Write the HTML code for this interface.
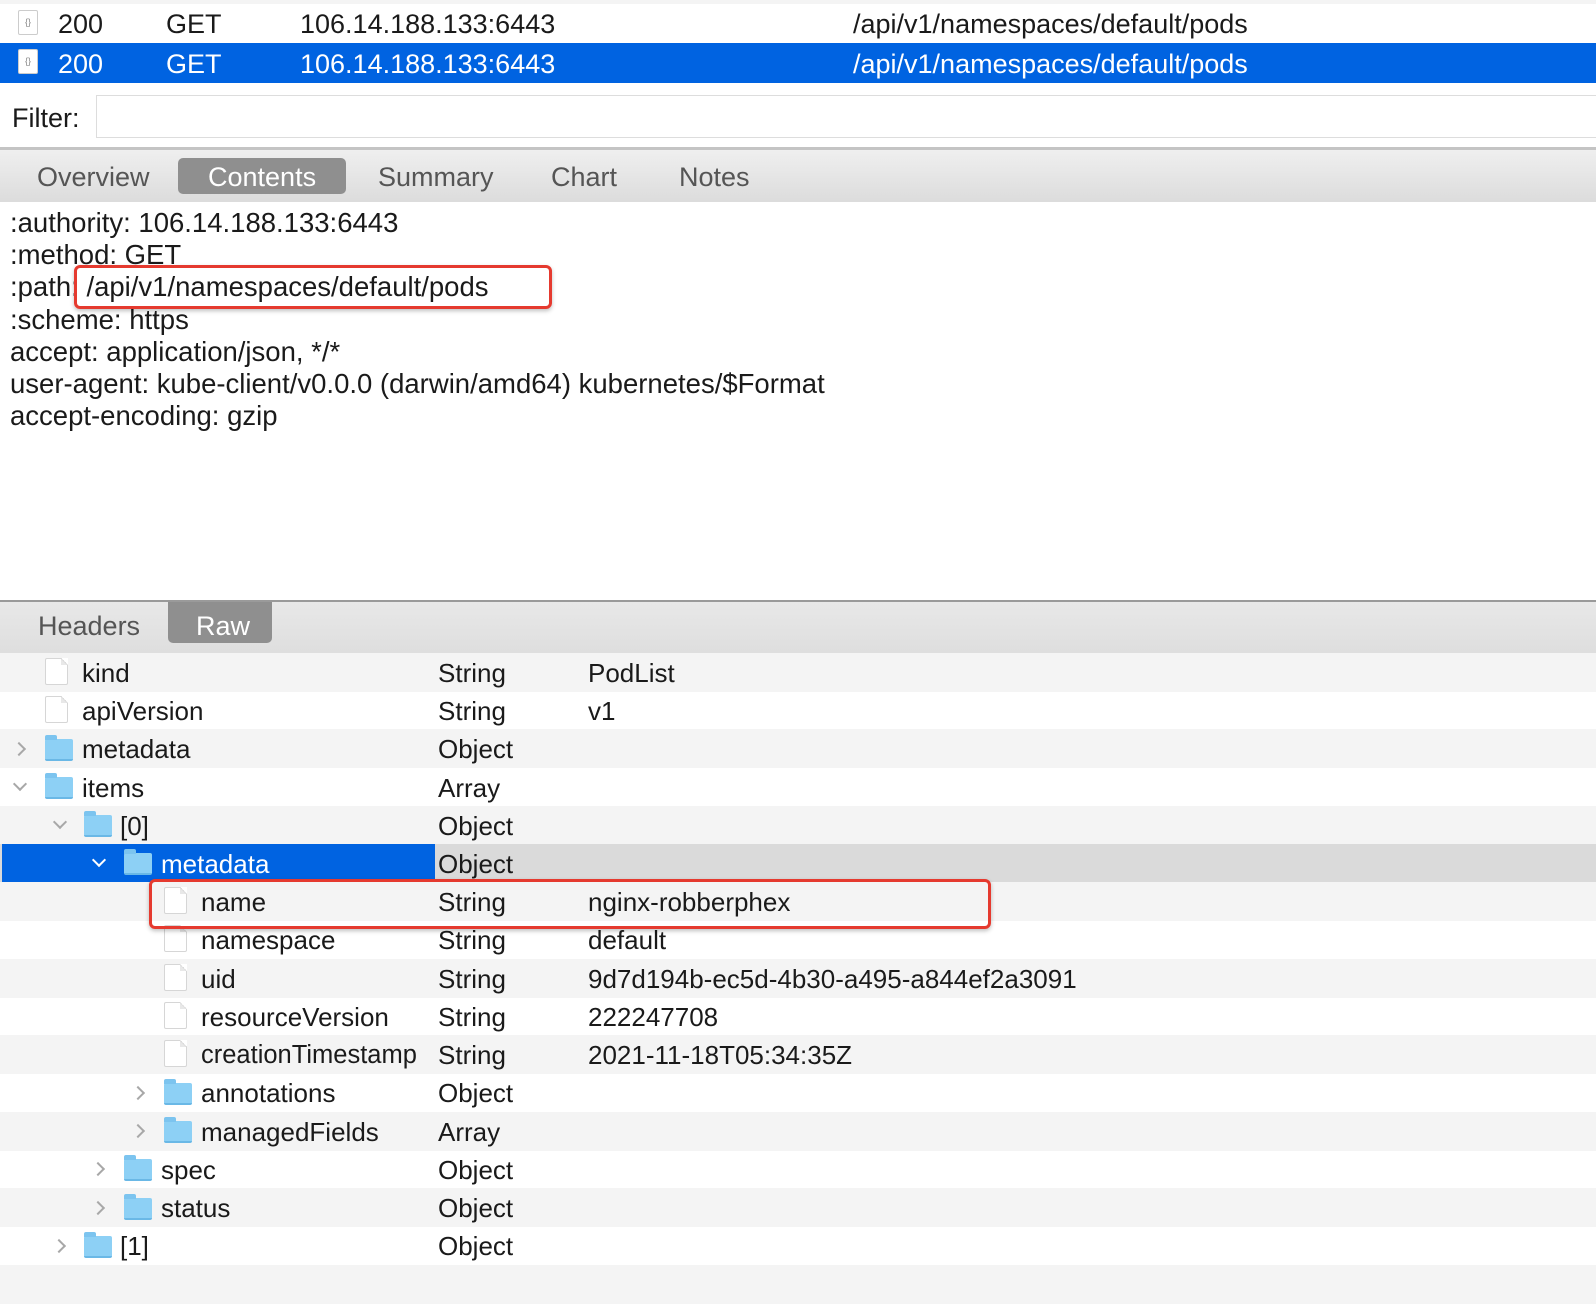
<!DOCTYPE html>
<html><head><meta charset="utf-8"><style>
*{margin:0;padding:0;box-sizing:border-box}
body{width:1596px;height:1310px;position:relative;overflow:hidden;background:#fff;font-family:"Liberation Sans",sans-serif;color:#1a1a1a}
.a{position:absolute;white-space:nowrap}
.t{font-size:26px;line-height:38px;padding-top:1px}
.h{font-size:27px;line-height:38px;padding-top:1px}
.row{position:absolute;left:0;width:1596px;height:39px}
.g{background:#f4f4f4}
.file{position:absolute;width:23px;height:27px;background:#fff;border:1px solid #d6d6d6;border-radius:2px}
.file:after{content:"";position:absolute;right:-1px;top:-1px;width:7px;height:7px;background:linear-gradient(225deg,#fff 50%,#ccc 50%,#e8e8e8 60%)}
.fold{position:absolute;width:28px;height:22px;background:#8dd0f5;border-radius:2px;border-bottom:2px solid #6ab8e6}
.fold:before{content:"";position:absolute;left:0;top:-4px;width:12px;height:5px;background:#7cc4ef;border-radius:2px 2px 0 0}
.chev{position:absolute;width:10px;height:10px;border-right:2px solid #a8a8a8;border-bottom:2px solid #a8a8a8}
.r{transform:rotate(-45deg)}
.d{transform:rotate(45deg)}
</style></head><body>
<div class="a" style="left:0;top:0;width:1596px;height:4px;background:#f4f4f4"></div>
<div class="a" style="left:0;top:43px;width:1596px;height:40px;background:#0063e1"></div>
<div class="a" style="left:18px;top:10px;width:20px;height:25px;background:#fff;border:1px solid #ccc;border-radius:2px;font-size:9px;color:#888;text-align:center;line-height:22px">{}</div>
<div class="a" style="left:18px;top:49px;width:20px;height:25px;background:#fff;border:1px solid #ccc;border-radius:2px;font-size:9px;color:#888;text-align:center;line-height:22px">{}</div>
<div class="a h" style="left:58px;top:4px">200</div>
<div class="a h" style="left:166px;top:4px">GET</div>
<div class="a h" style="left:300px;top:4px">106.14.188.133:6443</div>
<div class="a h" style="left:853px;top:4px">/api/v1/namespaces/default/pods</div>
<div class="a h" style="left:58px;top:44px;color:#fff">200</div>
<div class="a h" style="left:166px;top:44px;color:#fff">GET</div>
<div class="a h" style="left:300px;top:44px;color:#fff">106.14.188.133:6443</div>
<div class="a h" style="left:853px;top:44px;color:#fff">/api/v1/namespaces/default/pods</div>
<div class="a h" style="left:12px;top:98px">Filter:</div>
<div class="a" style="left:96px;top:95px;width:1500px;height:43px;border:1px solid #ddd;border-right:none;background:#fff"></div>
<div class="a" style="left:0;top:147px;width:1596px;height:3px;background:#c4c4c4"></div>
<div class="a" style="left:0;top:150px;width:1596px;height:52px;background:linear-gradient(#efefef,#dcdcdc)"></div>
<div class="a" style="left:178px;top:158px;width:168px;height:36px;background:#8f8f8f;border-radius:5px"></div>
<div class="a h" style="left:37px;top:157px;color:#555">Overview</div>
<div class="a h" style="left:208px;top:157px;color:#fff">Contents</div>
<div class="a h" style="left:378px;top:157px;color:#555">Summary</div>
<div class="a h" style="left:551px;top:157px;color:#555">Chart</div>
<div class="a h" style="left:679px;top:157px;color:#555">Notes</div>
<div class="a" style="left:10px;top:207px;font-size:27.5px;line-height:32.2px">:authority: 106.14.188.133:6443<br>:method: GET<br>:path: /api/v1/namespaces/default/pods<br>:scheme: https<br>accept: application/json, */*<br>user-agent: kube-client/v0.0.0 (darwin/amd64) kubernetes/$Format<br>accept-encoding: gzip</div>
<div class="a" style="left:74px;top:265px;width:478px;height:44px;border:3px solid #e53a2f;border-radius:6px;box-shadow:0 2px 4px rgba(0,0,0,.25)"></div>
<div class="a" style="left:0;top:600px;width:1596px;height:2px;background:#9a9a9a"></div>
<div class="a" style="left:0;top:602px;width:1596px;height:51px;background:linear-gradient(#e8e8e8,#dedede)"></div>
<div class="a" style="left:168px;top:602px;width:104px;height:41px;background:#8f8f8f;border-radius:0 0 5px 5px"></div>
<div class="a h" style="left:38px;top:606px;color:#555">Headers</div>
<div class="a h" style="left:196px;top:606px;color:#fff">Raw</div>

<div class="row g" style="top:653px"></div>
<div class="row g" style="top:729px"></div>
<div class="row g" style="top:806px"></div>
<div class="row" style="top:844px;background:#dadada"></div>
<div class="a" style="left:2px;top:844px;width:433px;height:38px;background:#0063e1"></div>
<div class="row g" style="top:882px"></div>
<div class="row g" style="top:959px"></div>
<div class="row g" style="top:1035px"></div>
<div class="row g" style="top:1112px"></div>
<div class="row g" style="top:1188px"></div>
<div class="row g" style="top:1265px"></div>

<div class="file" style="left:45px;top:658px"></div><div class="a t" style="left:82px;top:653px">kind</div><div class="a t" style="left:438px;top:653px">String</div><div class="a t" style="left:588px;top:653px">PodList</div>
<div class="file" style="left:45px;top:696px"></div><div class="a t" style="left:82px;top:691px">apiVersion</div><div class="a t" style="left:438px;top:691px">String</div><div class="a t" style="left:588px;top:691px">v1</div>
<div class="chev r" style="left:14px;top:744px"></div><div class="fold" style="left:45px;top:739px"></div><div class="a t" style="left:82px;top:729px">metadata</div><div class="a t" style="left:438px;top:729px">Object</div>
<div class="chev d" style="left:15px;top:779px"></div><div class="fold" style="left:45px;top:777px"></div><div class="a t" style="left:82px;top:768px">items</div><div class="a t" style="left:438px;top:768px">Array</div>
<div class="chev d" style="left:55px;top:817px"></div><div class="fold" style="left:84px;top:815px"></div><div class="a t" style="left:120px;top:806px">[0]</div><div class="a t" style="left:438px;top:806px">Object</div>
<div class="chev d" style="left:94px;top:855px;border-color:#fff"></div><div class="fold" style="left:124px;top:853px"></div><div class="a t" style="left:161px;top:844px;color:#fff">metadata</div><div class="a t" style="left:438px;top:844px">Object</div>
<div class="file" style="left:164px;top:887px"></div><div class="a t" style="left:201px;top:882px">name</div><div class="a t" style="left:438px;top:882px">String</div><div class="a t" style="left:588px;top:882px">nginx-robberphex</div>
<div class="file" style="left:164px;top:925px"></div><div class="a t" style="left:201px;top:920px">namespace</div><div class="a t" style="left:438px;top:920px">String</div><div class="a t" style="left:588px;top:920px">default</div>
<div class="file" style="left:164px;top:964px"></div><div class="a t" style="left:201px;top:959px">uid</div><div class="a t" style="left:438px;top:959px">String</div><div class="a t" style="left:588px;top:959px">9d7d194b-ec5d-4b30-a495-a844ef2a3091</div>
<div class="file" style="left:164px;top:1002px"></div><div class="a t" style="left:201px;top:997px">resourceVersion</div><div class="a t" style="left:438px;top:997px">String</div><div class="a t" style="left:588px;top:997px">222247708</div>
<div class="file" style="left:164px;top:1040px"></div><div class="a t" style="left:201px;top:1035px;font-size:25.5px">creationTimestamp</div><div class="a t" style="left:438px;top:1035px">String</div><div class="a t" style="left:588px;top:1035px">2021-11-18T05:34:35Z</div>
<div class="chev r" style="left:133px;top:1088px"></div><div class="fold" style="left:164px;top:1083px"></div><div class="a t" style="left:201px;top:1073px">annotations</div><div class="a t" style="left:438px;top:1073px">Object</div>
<div class="chev r" style="left:133px;top:1126px"></div><div class="fold" style="left:164px;top:1121px"></div><div class="a t" style="left:201px;top:1112px">managedFields</div><div class="a t" style="left:438px;top:1112px">Array</div>
<div class="chev r" style="left:93px;top:1164px"></div><div class="fold" style="left:124px;top:1159px"></div><div class="a t" style="left:161px;top:1150px">spec</div><div class="a t" style="left:438px;top:1150px">Object</div>
<div class="chev r" style="left:93px;top:1203px"></div><div class="fold" style="left:124px;top:1198px"></div><div class="a t" style="left:161px;top:1188px">status</div><div class="a t" style="left:438px;top:1188px">Object</div>
<div class="chev r" style="left:54px;top:1241px"></div><div class="fold" style="left:84px;top:1236px"></div><div class="a t" style="left:120px;top:1226px">[1]</div><div class="a t" style="left:438px;top:1226px">Object</div>

<div class="a" style="left:149px;top:879px;width:842px;height:50px;border:3px solid #e53a2f;border-radius:6px;box-shadow:0 2px 4px rgba(0,0,0,.25)"></div>
</body></html>
